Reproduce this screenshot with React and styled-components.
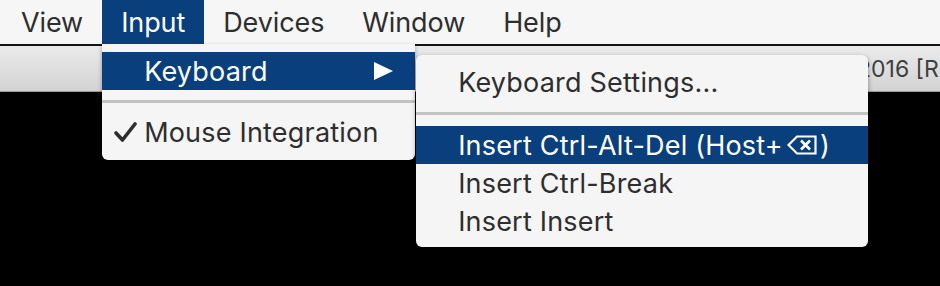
import React from 'react';
import styled, { createGlobalStyle } from 'styled-components';

const GlobalStyle = createGlobalStyle`
  html, body {
    margin: 0;
    padding: 0;
    background: #000;
  }
  body {
    font-family: Inter, "Noto Sans", "DejaVu Sans", sans-serif;
    -webkit-font-smoothing: antialiased;
  }
`;

const BLUE = '#0a3f7d';

const Screen = styled.div`
  position: relative;
  width: 940px;
  height: 286px;
  overflow: hidden;
  background: #000;
  display: flex;
  flex-direction: column;
`;

const MenuBar = styled.div`
  display: flex;
  align-items: stretch;
  height: 44px;
  padding-left: 2px;
  background: #f6f6f6;
  position: relative;
  z-index: 2;
`;

const MenuTitle = styled.div`
  position: relative;
  display: flex;
  align-items: center;
  padding: 0 19px;
  font-size: 27px;
  letter-spacing: -0.1px;
  color: ${({ active }) => (active ? '#fff' : '#2e2e2e')};
  background: ${({ active }) => (active ? BLUE : 'transparent')};
`;

const TitleBar = styled.div`
  height: 45px;
  border-top: 2px solid #151515;
  border-bottom: 1px solid #9a9a9a;
  background: linear-gradient(#ebebeb, #d2d2d2);
  display: flex;
  align-items: center;
  padding-left: 857px;
  overflow: hidden;
  white-space: nowrap;
  font-size: 23px;
  color: #3f3f3f;
`;

const Desktop = styled.div`
  flex: 1;
  background: #000;
`;

const Dropdown = styled.div`
  position: absolute;
  top: 100%;
  left: 0;
  width: 313px;
  padding: 8px 0 9px;
  background: #f5f5f5;
  border-radius: 0 0 6px 6px;
  box-shadow: 0 2px 4px rgba(0, 0, 0, 0.35);
  color: #2e2e2e;
`;

const Submenu = styled.div`
  position: absolute;
  top: 3px;
  left: calc(100% + 1px);
  width: 452px;
  padding: 8px 0 7px;
  background: #f5f5f5;
  border-radius: 6px;
  box-shadow: 0 2px 5px rgba(0, 0, 0, 0.4);
  color: #2e2e2e;
`;

const Item = styled.div`
  position: relative;
  display: flex;
  align-items: center;
  height: 38px;
  padding-left: ${({ indent }) => indent}px;
  padding-right: 22px;
  font-size: 27px;
  letter-spacing: 0.2px;
  white-space: nowrap;
  color: ${({ selected }) => (selected ? '#fff' : '#2e2e2e')};
  background: ${({ selected }) => (selected ? BLUE : 'transparent')};
`;

const Label = styled.span`
  flex: 1;
`;

const CheckMark = styled.svg`
  position: absolute;
  left: 12px;
  top: 9px;
`;

const Separator = styled.div`
  height: 3px;
  margin: ${({ gap }) => gap};
  background: #c3c3c3;
`;

const Backspace = styled.svg`
  display: inline-block;
  vertical-align: -2px;
  margin: 0 3px 0 4px;
`;

const Arrow = () => (
  <svg width="19" height="18" viewBox="0 0 19 18">
    <polygon points="0,0 19,9 0,18" fill="#fff" />
  </svg>
);

const BackspaceGlyph = () => (
  <Backspace width="30" height="20" viewBox="0 0 30 20">
    <path d="M1.5 10 L10 1.5 H28.5 V18.5 H10 Z" fill="none" stroke="#fff" strokeWidth="2.2" strokeLinejoin="miter" />
    <path d="M14 5.5 L23 14.5 M23 5.5 L14 14.5" stroke="#fff" strokeWidth="2.6" />
  </Backspace>
);

const App = () => (
  <>
    <GlobalStyle />
    <Screen>
      <MenuBar>
        <MenuTitle>View</MenuTitle>
        <MenuTitle active>
          Input
          <Dropdown>
            <Item indent={42} selected>
              <Label>Keyboard</Label>
              <Arrow />
              <Submenu>
                <Item indent={42}>Keyboard Settings...</Item>
                <Separator gap="11px 0 11px" />
                <Item indent={42} selected>
                  Insert Ctrl-Alt-Del (Host+
                  <BackspaceGlyph />
                  )
                </Item>
                <Item indent={42}>Insert Ctrl-Break</Item>
                <Item indent={42}>Insert Insert</Item>
              </Submenu>
            </Item>
            <Separator gap="10px 0 10px" />
            <Item indent={42}>
              <CheckMark width="23" height="20" viewBox="0 0 23 20">
                <path d="M2 11 L8.5 18 L21 2" fill="none" stroke="#2e2e2e" strokeWidth="3.6" strokeLinecap="round" strokeLinejoin="round" />
              </CheckMark>
              Mouse Integration
            </Item>
          </Dropdown>
        </MenuTitle>
        <MenuTitle>Devices</MenuTitle>
        <MenuTitle>Window</MenuTitle>
        <MenuTitle>Help</MenuTitle>
      </MenuBar>
      <TitleBar>2016 [Running] - Oracle VM VirtualBox</TitleBar>
      <Desktop />
    </Screen>
  </>
);

export default App;
